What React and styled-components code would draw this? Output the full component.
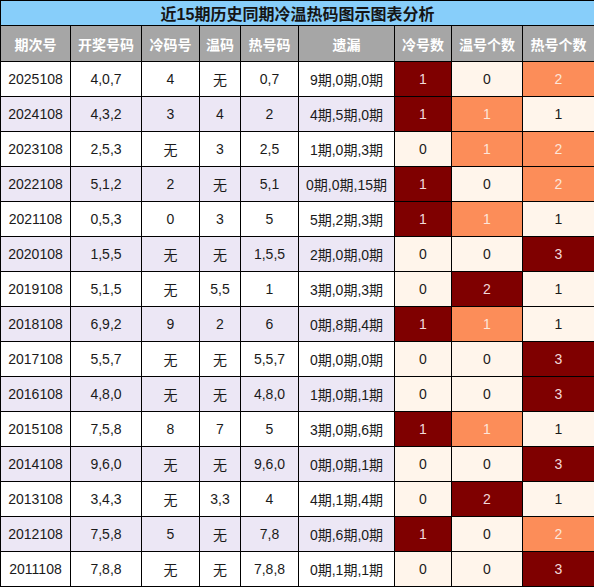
import React from "react";
import styled, { createGlobalStyle } from "styled-components";

const rows = [
  ["2025108", "4,0,7", "4", "无", "0,7", "9期,0期,0期", 1, 0, 2],
  ["2024108", "4,3,2", "3", "4", "2", "4期,5期,0期", 1, 1, 1],
  ["2023108", "2,5,3", "无", "3", "2,5", "1期,0期,3期", 0, 1, 2],
  ["2022108", "5,1,2", "2", "无", "5,1", "0期,0期,15期", 1, 0, 2],
  ["2021108", "0,5,3", "0", "3", "5", "5期,2期,3期", 1, 1, 1],
  ["2020108", "1,5,5", "无", "无", "1,5,5", "2期,0期,0期", 0, 0, 3],
  ["2019108", "5,1,5", "无", "5,5", "1", "3期,0期,3期", 0, 2, 1],
  ["2018108", "6,9,2", "9", "2", "6", "0期,8期,4期", 1, 1, 1],
  ["2017108", "5,5,7", "无", "无", "5,5,7", "0期,0期,0期", 0, 0, 3],
  ["2016108", "4,8,0", "无", "无", "4,8,0", "1期,0期,1期", 0, 0, 3],
  ["2015108", "7,5,8", "8", "7", "5", "3期,0期,6期", 1, 1, 1],
  ["2014108", "9,6,0", "无", "无", "9,6,0", "0期,0期,1期", 0, 0, 3],
  ["2013108", "3,4,3", "无", "3,3", "4", "4期,1期,4期", 0, 2, 1],
  ["2012108", "7,5,8", "5", "无", "7,8", "0期,6期,0期", 1, 0, 2],
  ["2011108", "7,8,8", "无", "无", "7,8,8", "0期,1期,1期", 0, 0, 3],
];

const headers = ["期次号", "开奖号码", "冷码号", "温码", "热号码", "遗漏", "冷号数", "温号个数", "热号个数"];
const widths = [70, 71, 58, 41, 58, 96, 57, 71, 72];

// colour scale per count column: lowest value cream, middle orange, highest dark red
const scales = [
  { low: 0, high: 1 },
  { low: 0, high: 2 },
  { low: 1, high: 3 },
];

const toneFor = (value, scaleIndex) => {
  const { low, high } = scales[scaleIndex];
  if (value <= low) return "low";
  if (value >= high) return "high";
  return "mid";
};

const App = () => {
  return (
    <>
      <GlobalStyle />
      <Table>
        <colgroup>
          {widths.map((w, i) => (
            <col key={i} style={{ width: w }} />
          ))}
        </colgroup>
        <thead>
          <tr>
            <TitleCell colSpan={9}>近15期历史同期冷温热码图示图表分析</TitleCell>
          </tr>
          <tr>
            {headers.map((h) => (
              <HeadCell key={h}>{h}</HeadCell>
            ))}
          </tr>
        </thead>
        <tbody>
          {rows.map((row, r) => (
            <Row key={row[0]} $striped={r % 2 === 1}>
              {row.slice(0, 6).map((text, c) => (
                <Cell key={c}>{text}</Cell>
              ))}
              {row.slice(6).map((n, c) => (
                <HeatCell key={c + 6} $tone={toneFor(n, c)}>
                  {n}
                </HeatCell>
              ))}
            </Row>
          ))}
        </tbody>
      </Table>
    </>
  );
};

const GlobalStyle = createGlobalStyle`
  body {
    margin: 0;
    background: #fff;
    font-family: "Liberation Sans", "Noto Sans CJK SC", sans-serif;
  }
`;

const Table = styled.table`
  width: 594px;
  table-layout: fixed;
  border-collapse: collapse;
  border: 1px solid #000;
  font-size: 14px;
  color: #1a1a1a;
`;

const TitleCell = styled.th`
  height: 24px;
  padding: 0;
  background: #87cefa;
  border: 1px solid #000;
  font-size: 16px;
  font-weight: bold;
  color: #151515;
  text-align: center;
`;

const HeadCell = styled.th`
  height: 35px;
  padding: 0;
  background: #a6a6a6;
  border: 1px solid #000;
  color: #fff;
  font-weight: bold;
  text-align: center;
  white-space: nowrap;
`;

const Row = styled.tr`
  background: ${(props) => (props.$striped ? "#ece7f5" : "#fff")};
`;

const Cell = styled.td`
  height: 34px;
  padding: 0;
  border: 1px solid #000;
  text-align: center;
  white-space: nowrap;
`;

const tones = {
  low: { bg: "#fff5eb", fg: "#1a1a1a" },
  mid: { bg: "#fc8d59", fg: "#fde6da" },
  high: { bg: "#7f0000", fg: "#f2dada" },
};

const HeatCell = styled(Cell)`
  background: ${(props) => tones[props.$tone].bg};
  color: ${(props) => tones[props.$tone].fg};
`;

export default App;
